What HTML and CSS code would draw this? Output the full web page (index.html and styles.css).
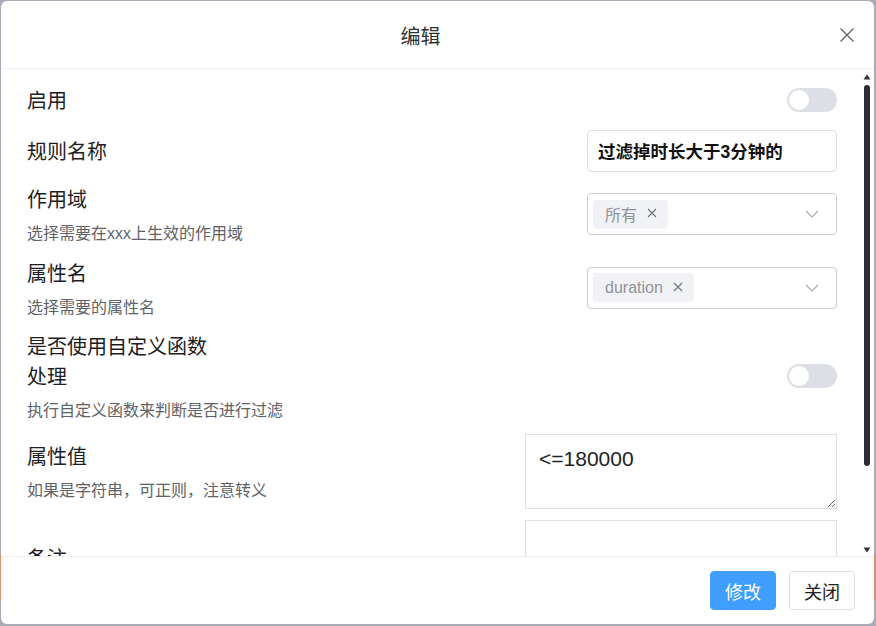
FILE: index.html
```html
<!DOCTYPE html>
<html lang="zh-CN">
<head>
<meta charset="utf-8">
<title>编辑</title>
<link rel="stylesheet" href="styles.css">
</head>
<body>
<div class="dialog">
  <header class="dlg-header">
    <span class="spacer"></span>
    <span class="dlg-title">编辑</span>
    <button class="close" aria-label="关闭">
      <svg width="16" height="16" viewBox="0 0 16 16"><path d="M1.5 1.5 L14.5 14.5 M14.5 1.5 L1.5 14.5" stroke="#606266" stroke-width="1.3" fill="none"/></svg>
    </button>
  </header>
  <div class="dlg-body">
    <div class="form">
      <div class="row">
        <div class="label-col"><div class="label">启用</div></div>
        <span class="switch"><span class="knob"></span></span>
      </div>
      <div class="row">
        <div class="label-col"><div class="label">规则名称</div></div>
        <input class="text-input" type="text" value="过滤掉时长大于3分钟的">
      </div>
      <div class="row">
        <div class="label-col">
          <div class="label">作用域</div>
          <div class="desc">选择需要在xxx上生效的作用域</div>
        </div>
        <div class="select">
          <span class="tag">所有<svg class="tag-x" width="10" height="10" viewBox="0 0 10 10"><path d="M1 1 L9 9 M9 1 L1 9" stroke="#6f7278" stroke-width="1.1" fill="none"/></svg></span>
          <svg class="chevron" width="14" height="8" viewBox="0 0 14 8"><path d="M1 1 L7 7 L13 1" stroke="#a8abb2" stroke-width="1.2" fill="none"/></svg>
        </div>
      </div>
      <div class="row">
        <div class="label-col">
          <div class="label">属性名</div>
          <div class="desc">选择需要的属性名</div>
        </div>
        <div class="select">
          <span class="tag">duration<svg class="tag-x" width="10" height="10" viewBox="0 0 10 10"><path d="M1 1 L9 9 M9 1 L1 9" stroke="#6f7278" stroke-width="1.1" fill="none"/></svg></span>
          <svg class="chevron" width="14" height="8" viewBox="0 0 14 8"><path d="M1 1 L7 7 L13 1" stroke="#a8abb2" stroke-width="1.2" fill="none"/></svg>
        </div>
      </div>
      <div class="row">
        <div class="label-col">
          <div class="label">是否使用自定义函数处理</div>
          <div class="desc">执行自定义函数来判断是否进行过滤</div>
        </div>
        <span class="switch"><span class="knob"></span></span>
      </div>
      <div class="row">
        <div class="label-col">
          <div class="label">属性值</div>
          <div class="desc">如果是字符串，可正则，注意转义</div>
        </div>
        <textarea class="area">&lt;=180000</textarea>
      </div>
      <div class="row">
        <div class="label-col"><div class="label">备注</div></div>
        <textarea class="area"></textarea>
      </div>
    </div>
    <div class="scrollbar">
      <svg class="arrow" width="8" height="6" viewBox="0 0 8 6"><path d="M4 0.5 L7.5 5.5 L0.5 5.5 Z" fill="#333"/></svg>
      <span class="thumb"></span>
      <span class="track-rest"></span>
      <svg class="arrow" width="8" height="6" viewBox="0 0 8 6"><path d="M0.5 0.5 L7.5 0.5 L4 5.5 Z" fill="#333"/></svg>
    </div>
  </div>
  <footer class="dlg-footer">
    <button class="btn btn-primary">修改</button>
    <button class="btn">关闭</button>
  </footer>
</div>
</body>
</html>
```
FILE: styles.css
```css
* { box-sizing: border-box; }
html, body { height: 100%; }
body {
  margin: 0;
  background: linear-gradient(to bottom, #a9aab6 0, #a9aab6 555px, #d8926c 555px, #d8926c 600px, #a9aab6 600px);
  font-family: "Liberation Sans", "Noto Sans CJK SC", sans-serif;
  color: #222;
  overflow: hidden;
}
.dialog {
  margin: 1px 2px 2px 1px;
  height: calc(100vh - 3px);
  background: #fff;
  border-radius: 6px;
  display: flex;
  flex-direction: column;
  overflow: hidden;
}
.dlg-header {
  height: 68px;
  flex: none;
  display: grid;
  grid-template-columns: 1fr auto 1fr;
  align-items: center;
  padding: 4px 18px 0 0;
  border-bottom: 1px solid #eef0f4;
}
.dlg-title {
  font-size: 20px;
  line-height: 28px;
  color: #303133;
  margin-right: 16px;
}
.close {
  justify-self: end;
  border: none;
  background: none;
  padding: 0;
  width: 18px;
  height: 18px;
  margin-top: -3px;
  display: flex;
  align-items: center;
  justify-content: center;
}
.dlg-body {
  flex: 1;
  position: relative;
  overflow: hidden;
  min-height: 0;
}
.form {
  padding: 12px 37px 0 26px;
  display: flex;
  flex-direction: column;
  gap: 11.5px;
}
.row {
  min-height: 37px;
  display: flex;
  align-items: center;
  justify-content: space-between;
}
.label-col { flex: 1; min-width: 0; }
.label {
  max-width: 190px;
  padding-top: 2px;
  font-size: 20px;
  line-height: 30px;
  color: #1d1d1f;
}
.label-col .label + .desc { margin-top: 8px; }
.desc {
  font-size: 16px;
  line-height: 22px;
  color: #606266;
  white-space: nowrap;
}
.switch {
  flex: none;
  width: 50px;
  height: 24px;
  border-radius: 12px;
  background: #dcdfe6;
  padding: 2px;
  display: flex;
}
.knob {
  width: 20px;
  height: 20px;
  border-radius: 50%;
  background: #fff;
}
.text-input {
  flex: none;
  width: 250px;
  height: 42px;
  border: 1px solid #dcdfe6;
  border-radius: 4px;
  padding: 0 10px;
  font-family: "Liberation Sans", "Noto Sans CJK SC", sans-serif;
  font-size: 17.5px;
  font-weight: bold;
  color: #111;
  outline: none;
}
.select {
  flex: none;
  width: 250px;
  height: 42px;
  border: 1px solid #c9ccd3;
  border-radius: 4px;
  padding: 0 17px 0 5px;
  display: flex;
  align-items: center;
  justify-content: space-between;
}
.tag {
  height: 29px;
  background: #f0f2f5;
  border-radius: 4px;
  padding: 0 11px 0 12px;
  display: flex;
  align-items: center;
  font-size: 16px;
  color: #909399;
}
.tag-x {
  margin-left: 10px;
  margin-top: -2px;
}
.area {
  flex: none;
  width: 312px;
  height: 75px;
  border: 1px solid #dcdfe6;
  border-radius: 0;
  padding: 11px 13px;
  font-family: "Liberation Sans", "Noto Sans CJK SC", sans-serif;
  font-size: 21px;
  line-height: 26px;
  color: #222;
  resize: vertical;
  outline: none;
}
.scrollbar {
  position: absolute;
  top: 5px;
  right: 3px;
  bottom: 3px;
  width: 8px;
  display: flex;
  flex-direction: column;
  align-items: center;
}
.arrow { flex: none; }
.thumb {
  margin-top: 5px;
  width: 6px;
  height: 381px;
  border-radius: 3px;
  background: #2c2c34;
  flex: none;
}
.track-rest { flex: 1; }
.dlg-footer {
  flex: none;
  height: 68px;
  border-top: 1px solid #eef0f4;
  display: flex;
  justify-content: flex-end;
  align-items: center;
  gap: 13px;
  padding: 0 19px 0 0;
}
.btn {
  width: 66px;
  height: 39px;
  border: 1px solid #dcdfe6;
  border-radius: 4px;
  background: #fff;
  font-family: "Liberation Sans", "Noto Sans CJK SC", sans-serif;
  font-size: 18px;
  color: #222;
  padding: 0;
}
.btn-primary {
  background: #409eff;
  border-color: #409eff;
  color: #fff;
}
```
